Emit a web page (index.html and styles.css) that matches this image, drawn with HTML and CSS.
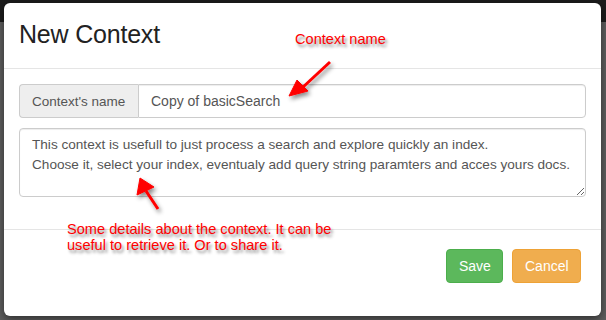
FILE: index.html
```html
<!DOCTYPE html>
<html lang="en">
<head>
    <meta charset="UTF-8">
    <title>New Context</title>
    <link rel="stylesheet" href="styles.css">
</head>
<body>
    <div class="topbar"></div>
    <div class="backdrop"></div>

    <div class="modal">
        <div class="modal-header">
            <h4 class="modal-title">New Context</h4>
        </div>
        <div class="modal-body">
            <div class="input-group">
                <span class="addon">Context's name</span>
                <input class="field" type="text" value="Copy of basicSearch">
            </div>
            <textarea class="field area">This context is usefull to just process a search and explore quickly an index.
Choose it, select your index, eventualy add query string paramters and acces yours docs.</textarea>
        </div>
        <div class="modal-footer">
            <button class="btn btn-save">Save</button>
            <button class="btn btn-cancel">Cancel</button>
        </div>

        <!-- annotations drawn over the screenshot -->
        <div class="note note-name">Context name</div>
        <div class="note note-desc">Some details about the context. It can be<br>useful to retrieve it. Or to share it.</div>
        <svg class="arrows" width="597" height="313" viewBox="0 0 597 313">
            <defs>
                <filter id="shadow" x="-50%" y="-50%" width="200%" height="200%">
                    <feDropShadow dx="2" dy="3" stdDeviation="2" flood-color="#000" flood-opacity="0.45"/>
                </filter>
            </defs>
            <g filter="url(#shadow)" fill="#f00" stroke="#f00">
                <line x1="326" y1="59" x2="298" y2="85" stroke-width="3"/>
                <polygon points="285,93 293,77 304,88" stroke-width="1"/>
                <line x1="154" y1="206" x2="142" y2="188" stroke-width="3"/>
                <polygon points="136,175 133,192 150,184" stroke-width="1"/>
            </g>
        </svg>
    </div>
</body>
</html>
```

FILE: styles.css
```css
body {
    margin: 0;
    background: #626262;
    font-family: "Liberation Sans", Arial, sans-serif;
    font-size: 14px;
    color: #333;
    height: 320px;
    overflow: hidden;
}
.topbar {
    height: 22px;
    background: #1c1c1c;
}
.backdrop {
    height: 298px;
    background: #5e5e5e;
}
.modal {
    position: absolute;
    top: 3px;
    left: 4px;
    width: 597px;
    height: 313px;
    background: #fff;
    border-radius: 6px;
    box-shadow: 0 3px 9px rgba(0, 0, 0, 0.5);
    box-sizing: border-box;
}
.modal-header {
    padding: 18px 15px 20px;
    border-bottom: 1px solid #e5e5e5;
}
.modal-title {
    margin: 0;
    font-size: 25px;
    font-weight: normal;
    line-height: 27px;
    letter-spacing: -0.2px;
    color: #222;
}
.modal-body {
    padding: 15px 15px 32px;
}
.input-group {
    display: flex;
    height: 34px;
}
.addon {
    display: flex;
    align-items: center;
    padding: 0 12px;
    width: 119px;
    box-sizing: border-box;
    background: #eee;
    border: 1px solid #ccc;
    border-right: none;
    border-radius: 4px 0 0 4px;
    color: #555;
    font-size: 13.5px;
}
.field {
    font-family: inherit;
    font-size: 14px;
    color: #555;
    border: 1px solid #ccc;
    box-sizing: border-box;
    padding: 6px 12px;
    background: #fff;
    box-shadow: inset 0 1px 1px rgba(0, 0, 0, 0.075);
}
.input-group .field {
    flex: 1;
    border-radius: 0 4px 4px 0;
}
.area {
    display: block;
    width: 100%;
    height: 69px;
    margin-top: 10px;
    border-radius: 4px;
    font-size: 13.6px;
    line-height: 20px;
    resize: vertical;
    overflow: hidden;
}
.modal-footer {
    border-top: 1px solid #e5e5e5;
    padding: 19px 20px;
    display: flex;
    justify-content: flex-end;
}
.btn {
    font-family: inherit;
    font-size: 14px;
    color: #fff;
    height: 34px;
    padding: 0 12px;
    border-radius: 4px;
    border: 1px solid transparent;
}
.btn-save {
    background: #5cb85c;
    border-color: #4cae4c;
    width: 57px;
}
.btn-cancel {
    background: #f0ad4e;
    border-color: #eea236;
    width: 69px;
    margin-left: 9px;
}
.note {
    position: absolute;
    color: #f00;
    font-size: 14.6px;
    line-height: 16px;
    text-shadow: 2px 3px 3px rgba(0, 0, 0, 0.45);
}
.note-name {
    top: 28px;
    left: 291px;
}
.note-desc {
    top: 218px;
    left: 63px;
}
.arrows {
    position: absolute;
    top: 0;
    left: 0;
    pointer-events: none;
}
```
